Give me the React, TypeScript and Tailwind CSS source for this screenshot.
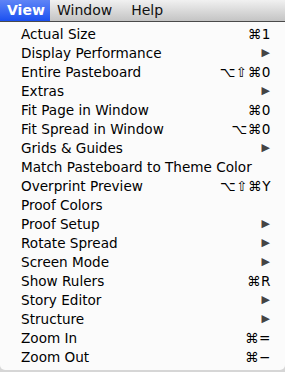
type Item = { label: string; shortcut?: string; sub?: boolean };

const items: Item[] = [
  { label: "Actual Size", shortcut: "⌘1" },
  { label: "Display Performance", sub: true },
  { label: "Entire Pasteboard", shortcut: "⌥⇧⌘0" },
  { label: "Extras", sub: true },
  { label: "Fit Page in Window", shortcut: "⌘0" },
  { label: "Fit Spread in Window", shortcut: "⌥⌘0" },
  { label: "Grids & Guides", sub: true },
  { label: "Match Pasteboard to Theme Color" },
  { label: "Overprint Preview", shortcut: "⌥⇧⌘Y" },
  { label: "Proof Colors" },
  { label: "Proof Setup", sub: true },
  { label: "Rotate Spread", sub: true },
  { label: "Screen Mode", sub: true },
  { label: "Show Rulers", shortcut: "⌘R" },
  { label: "Story Editor", sub: true },
  { label: "Structure", sub: true },
  { label: "Zoom In", shortcut: "⌘=" },
  { label: "Zoom Out", shortcut: "⌘−" },
];

export default function App() {
  return (
    <div className="w-[285px] h-[372px] bg-[#d6d6d6] overflow-hidden" style={{ fontFamily: '"DejaVu Sans", sans-serif' }}>
      {/* menu bar */}
      <div className="h-[22px] flex items-stretch bg-gradient-to-b from-[#f1f1f1] to-[#c4c4c4] border-b border-[#4a4a4a] text-[14px] text-[#111]">
        <div className="w-[50px] flex items-center pl-[7px] bg-gradient-to-b from-[#5f84f6] to-[#1a4ff0] text-white font-bold">View</div>
        <div className="flex items-center pl-[7px] pr-[19px]">Window</div>
        <div className="flex items-center">Help</div>
      </div>
      {/* dropdown */}
      <div className="bg-[#fbfbfb] rounded-b-[5px] pt-[3px] h-[348px] text-[13.6px] text-black">
        {items.map((it, i) => (
          <div key={i} className="h-[19px] flex items-center justify-between pl-[21px] pr-[14px]">
            <span>{it.label}</span>
            {it.shortcut && <span className="tracking-[0.5px]">{it.shortcut}</span>}
            {it.sub && <span className="text-[11px] text-[#444] pr-[1px]">▶</span>}
          </div>
        ))}
      </div>
    </div>
  );
}
